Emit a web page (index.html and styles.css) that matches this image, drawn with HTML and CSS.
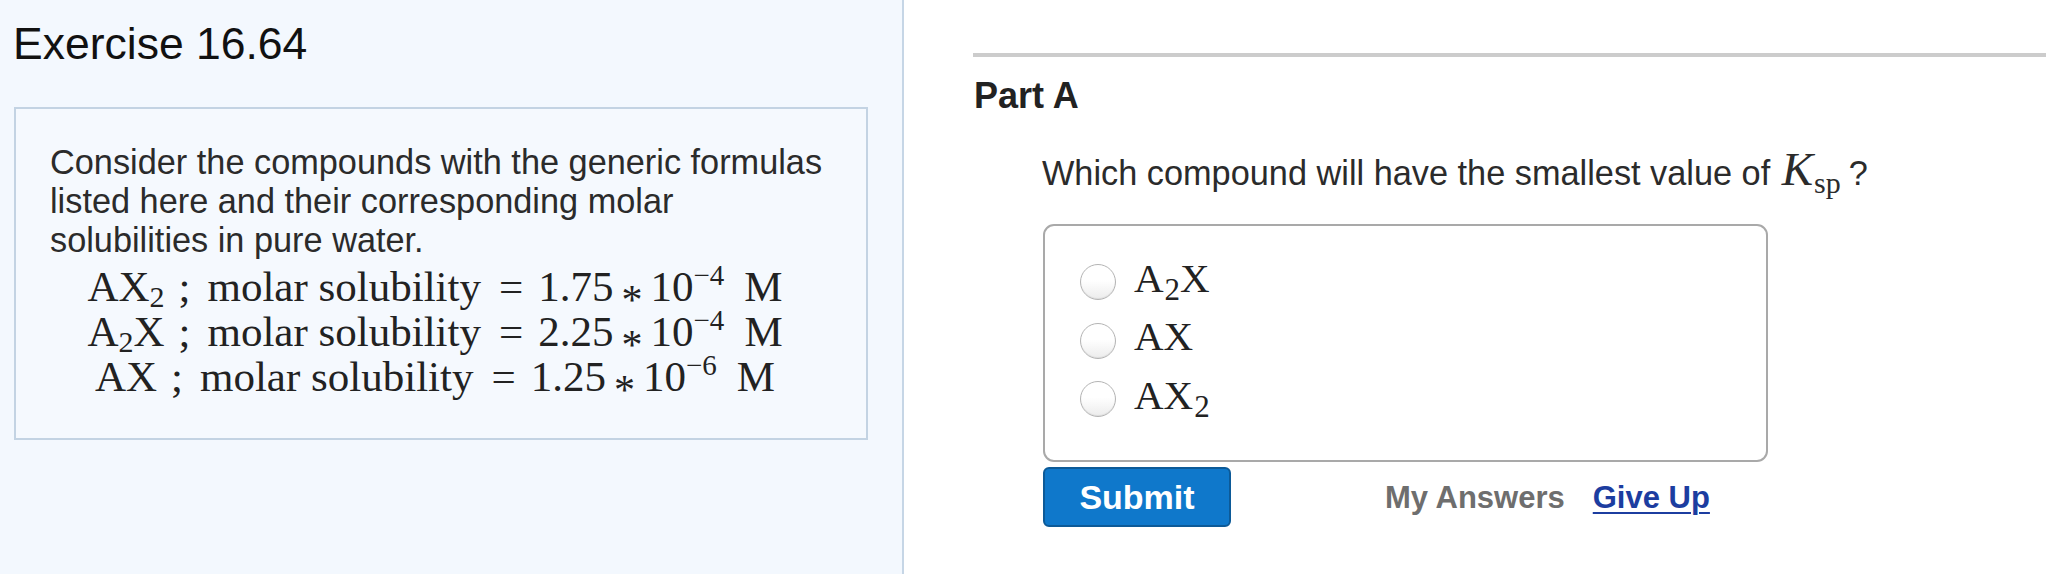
FILE: index.html
```html
<!DOCTYPE html>
<html lang="en">
<head>
<meta charset="utf-8">
<title>Exercise 16.64</title>
<link rel="stylesheet" href="styles.css">
</head>
<body>
<div class="page">
  <aside class="left">
    <h1 class="title">Exercise 16.64</h1>
    <div class="intro">
      <p class="intro-text">Consider the compounds with the generic formulas listed here and their corresponding molar solubilities in pure water.</p>
      <div class="math-lines">
        <div class="math-line">AX<sub>2</sub><span class="semi">;</span>molar solubility<span class="rel">=</span>1.75<span class="ast">*</span>10<sup>−4</sup><span class="unit">M</span></div>
        <div class="math-line">A<sub>2</sub>X<span class="semi">;</span>molar solubility<span class="rel">=</span>2.25<span class="ast">*</span>10<sup>−4</sup><span class="unit">M</span></div>
        <div class="math-line">AX<span class="semi">;</span>molar solubility<span class="rel">=</span>1.25<span class="ast">*</span>10<sup>−6</sup><span class="unit">M</span></div>
      </div>
    </div>
  </aside>
  <main class="right">
    <div class="separator"></div>
    <h2 class="part-title">Part A</h2>
    <p class="question">Which compound will have the smallest value of <span class="ksp"><i>K</i><sub>sp</sub></span><span class="qmark">?</span></p>
    <div class="choices">
      <label class="choice"><input type="radio" name="ans" class="radio"><span class="choice-label">A<sub>2</sub>X</span></label>
      <label class="choice"><input type="radio" name="ans" class="radio"><span class="choice-label">AX</span></label>
      <label class="choice"><input type="radio" name="ans" class="radio"><span class="choice-label">AX<sub>2</sub></span></label>
    </div>
    <div class="actions">
      <button class="submit" type="button">Submit</button>
      <span class="my-answers">My Answers</span>
      <a class="give-up" href="#">Give Up</a>
    </div>
  </main>
</div>
</body>
</html>
```

FILE: styles.css
```css
html, body {
  margin: 0;
  padding: 0;
  height: 100%;
  background: #ffffff;
  font-family: "Liberation Sans", Arial, Helvetica, sans-serif;
}

.page {
  display: flex;
  height: 574px;
  overflow: hidden;
}

.left {
  width: 904px;
  flex: none;
  background: #f3f8fe;
  border-right: 2px solid #c6d6e6;
  padding: 17px 0 0 14px;
  box-sizing: border-box;
}

.title {
  margin: 0 0 37px -1px;
  font-size: 44.5px;
  font-weight: normal;
  line-height: 53px;
  color: #111111;
}

.intro {
  width: 854px;
  box-sizing: border-box;
  border: 2px solid #c3d3e3;
  background: #f5f9fe;
  padding: 34px 30px 39px 34px;
}

.intro-text {
  margin: 0;
  max-width: 781px;
  font-size: 34.3px;
  line-height: 39px;
  color: #2b2b2b;
}

.math-lines {
  margin-top: 4px;
  font-family: "Liberation Serif", "Times New Roman", serif;
  font-size: 43px;
  line-height: 45px;
  color: #222222;
}

.math-line {
  text-align: center;
  padding-right: 16px;
}

.math-line sub {
  font-size: 30px;
  vertical-align: -6px;
  line-height: 0;
}

.math-line sup {
  font-size: 29px;
  vertical-align: 16px;
  line-height: 0;
}

.semi {
  margin: 0 17px 0 14px;
}

.rel {
  margin: 0 15px 0 18px;
}

.ast {
  display: inline-block;
  margin: 0 8px;
  font-size: 42px;
  line-height: 0;
  vertical-align: -13px;
}

.unit {
  margin-left: 20px;
}

.right {
  flex: 1;
  padding-left: 69px;
  padding-top: 53px;
  min-width: 0;
}

.separator {
  height: 4px;
  background: #cccccc;
}

.part-title {
  margin: 17px 0 0 1px;
  font-size: 36px;
  font-weight: bold;
  line-height: 43px;
  color: #222222;
}

.question {
  margin: 33px 0 0 69px;
  font-size: 34.3px;
  line-height: 39px;
  color: #2b2b2b;
}

.ksp {
  font-family: "Liberation Serif", "Times New Roman", serif;
  margin-left: 2px;
}

.ksp i {
  font-size: 47px;
}

.ksp sub {
  font-size: 30px;
  vertical-align: -8px;
  line-height: 0;
  margin-left: 1px;
}

.qmark {
  margin-left: 8px;
}

.choices {
  margin: 31px 0 0 70px;
  width: 725px;
  height: 238px;
  box-sizing: border-box;
  border: 2px solid #a9a9a9;
  border-radius: 11px;
  background: #ffffff;
  padding: 27px 0 0 35px;
  display: flex;
  flex-direction: column;
}

.choice {
  display: flex;
  align-items: center;
  gap: 18px;
  height: 58.5px;
}

.radio {
  appearance: none;
  -webkit-appearance: none;
  margin: 0;
  width: 36px;
  height: 36px;
  flex: none;
  border-radius: 50%;
  border: 1.5px solid #b4b4b4;
  background: linear-gradient(#ffffff 0%, #ffffff 45%, #ececec 100%);
  box-shadow: inset 0 -1px 1px rgba(0, 0, 0, 0.06);
  box-sizing: border-box;
}

.choice-label {
  font-family: "Liberation Serif", "Times New Roman", serif;
  font-size: 41px;
  line-height: 1;
  color: #222222;
  position: relative;
  top: -4px;
}

.choice-label sub {
  font-size: 31px;
  vertical-align: -8px;
  line-height: 0;
  margin-left: 1px;
}

.actions {
  margin: 5px 0 0 70px;
  display: flex;
  align-items: center;
}

.submit {
  width: 188px;
  height: 60px;
  box-sizing: border-box;
  border: 2px solid #0c5a98;
  border-radius: 6px;
  background: #0f78cb;
  color: #ffffff;
  font-family: "Liberation Sans", Arial, Helvetica, sans-serif;
  font-size: 34px;
  font-weight: bold;
  padding: 0;
  margin: 0;
}

.my-answers {
  margin-left: 154px;
  font-size: 31px;
  font-weight: bold;
  color: #6e6e6e;
  position: relative;
  top: 1px;
}

.give-up {
  margin-left: 28px;
  font-size: 31px;
  font-weight: bold;
  color: #1c3da0;
  text-decoration: underline;
  text-underline-offset: 4px;
  text-decoration-thickness: 2px;
  position: relative;
  top: 1px;
}
```
